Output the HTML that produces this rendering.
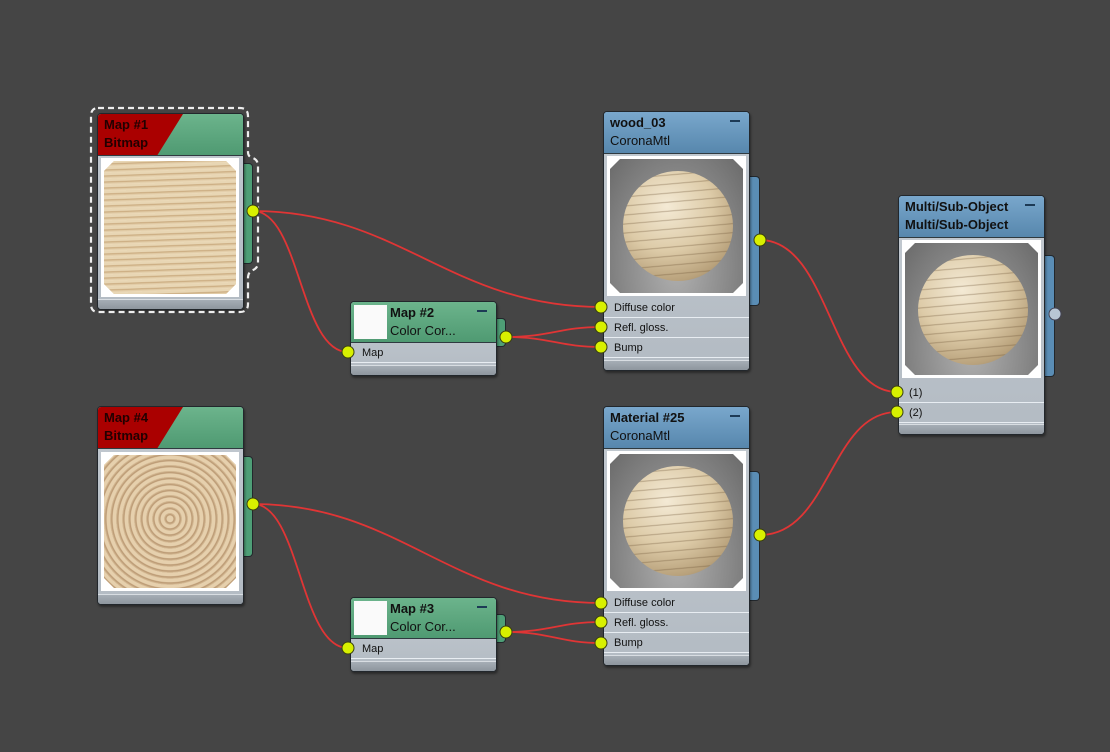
<!DOCTYPE html>
<html><head><style>
body{margin:0;width:1110px;height:752px;background:#454545;position:relative;overflow:hidden;font-family:"Liberation Sans",sans-serif;}
.n{position:absolute;background:linear-gradient(#c3cad1,#b3bbc3);border:1px solid #22272c;border-radius:4px;box-shadow:1px 2px 2px rgba(0,0,0,.4);}
.hd{position:absolute;left:0;right:0;top:0;border-radius:3px 3px 0 0;border-bottom:1px solid #2f3a40;overflow:hidden;}
.g{background:linear-gradient(#6cb48c,#4f9a72);}
.b{background:linear-gradient(#79a7cc,#5787ad);}
.red{position:absolute;left:0;top:0;width:85px;height:100%;background:#a00;clip-path:polygon(0 0,100% 0,70% 100%,0 100%);}
.t{position:absolute;font-size:13px;font-weight:bold;color:#111;line-height:18px;}
.t2{font-weight:normal;}
.img{position:absolute;background:#fff;}
.pic{position:absolute;left:3px;top:3px;right:3px;bottom:3px;clip-path:polygon(10px 0,calc(100% - 10px) 0,100% 10px,100% calc(100% - 10px),calc(100% - 10px) 100%,10px 100%,0 calc(100% - 10px),0 10px);}
.sph{background:radial-gradient(ellipse at 50% 80%,#b0b0b0,#8a8a8a 55%,#6a6a6a);}
.ball{position:absolute;left:13px;top:12px;width:110px;height:110px;border-radius:50%;background:repeating-linear-gradient(175deg,rgba(120,95,60,0) 0 7px,rgba(110,85,55,.4) 8px,rgba(120,95,60,0) 9px),radial-gradient(circle at 40% 32%,#f4ead5,#ddcba8 45%,#b9a27c 75%,#7d6d55);}
.tab{position:absolute;border:1px solid #22272c;border-left:none;border-radius:0 4px 4px 0;}
.row{position:absolute;left:0;right:0;height:20px;border-bottom:1px solid #e8edf2;font-size:11px;color:#111;line-height:20px;padding-left:10px;box-sizing:border-box;}
.ft{position:absolute;left:0;right:0;bottom:0;height:9px;background:linear-gradient(#a5adb5,#8e969e);border-top:1px solid #d8dde2;border-radius:0 0 3px 3px;}
.min{position:absolute;right:9px;top:8px;width:10px;height:2px;background:#1d3a55;}
.wood1{background:repeating-linear-gradient(178deg,#e8d6b4 0 2px,#c8a87c 3px,#dfc8a2 4px,#eddcbc 6px),#e0c9a3;}
.wood2{background:repeating-radial-gradient(circle at 50% 48%,#e6d0ad 0 3px,#b89670 4px,#dcc39e 6px),#ddc49e;}
</style></head><body>
<svg width="1110" height="752" style="position:absolute;left:0;top:0" fill="none" stroke="#e03535" stroke-width="1.8">
<path d="M253 211 C400 211,450 307,601 307"/>
<path d="M253 211 C300 211,300 352,348 352"/>
<path d="M506 337 C550 337,560 327,601 327"/>
<path d="M506 337 C550 337,560 347,601 347"/>
<path d="M760 240 C830 240,830 392,897 392"/>
<path d="M253 504 C400 504,450 603,601 603"/>
<path d="M253 504 C300 504,300 648,348 648"/>
<path d="M506 632 C550 632,560 622,601 622"/>
<path d="M506 632 C550 632,560 643,601 643"/>
<path d="M760 535 C830 535,830 412,897 412"/>
</svg>

<!-- Map1 -->
<div class="tab" style="left:243px;top:163px;width:9px;height:99px;background:#4e9e76"></div>
<div class="n" style="left:97px;top:113px;width:145px;height:195px">
<div class="hd g" style="height:41px"><div class="red"></div></div>
<div class="t" style="left:6px;top:2px;color:#200">Map #1<br>Bitmap</div>
<div class="img" style="left:3px;top:44px;width:138px;height:139px"><div class="pic wood1"></div></div>
<div class="ft"></div></div>
<svg width="1110" height="752" style="position:absolute;left:0;top:0" fill="none" stroke="#eee" stroke-width="2.2" stroke-dasharray="6 4">
<path d="M98 108 H240 Q248 108 248 116 V152 Q248 157 253 158 Q258 160 258 166 V262 Q258 268 253 270 Q248 272 248 278 V304 Q248 312 240 312 H98 Q91 312 91 304 V116 Q91 108 98 108 Z"/>
</svg>

<!-- Map4 -->
<div class="tab" style="left:243px;top:456px;width:9px;height:99px;background:#4e9e76"></div>
<div class="n" style="left:97px;top:406px;width:145px;height:197px">
<div class="hd g" style="height:41px"><div class="red"></div></div>
<div class="t" style="left:6px;top:2px;color:#200">Map #4<br>Bitmap</div>
<div class="img" style="left:3px;top:45px;width:138px;height:139px"><div class="pic wood2"></div></div>
<div class="ft"></div></div>

<!-- Map2 / Map3 -->
<div class="tab" style="left:496px;top:318px;width:9px;height:27px;background:#4e9e76"></div>
<div class="n" style="left:350px;top:301px;width:145px;height:73px">
<div class="hd g" style="height:40px"></div>
<div style="position:absolute;left:3px;top:3px;width:33px;height:34px;background:#fafafa"></div>
<div class="t" style="left:39px;top:2px">Map #2<br><span class="t2">Color Cor...</span></div><div class="min"></div>
<div class="row" style="top:41px;padding-left:11px">Map</div>
<div class="ft"></div></div>
<div class="tab" style="left:496px;top:614px;width:9px;height:27px;background:#4e9e76"></div>
<div class="n" style="left:350px;top:597px;width:145px;height:73px">
<div class="hd g" style="height:40px"></div>
<div style="position:absolute;left:3px;top:3px;width:33px;height:34px;background:#fafafa"></div>
<div class="t" style="left:39px;top:2px">Map #3<br><span class="t2">Color Cor...</span></div><div class="min"></div>
<div class="row" style="top:41px;padding-left:11px">Map</div>
<div class="ft"></div></div>

<!-- wood_03 -->
<div class="tab" style="left:749px;top:176px;width:10px;height:128px;background:#5a8db5"></div>
<div class="n" style="left:603px;top:111px;width:145px;height:258px">
<div class="hd b" style="height:41px"></div>
<div class="t" style="left:6px;top:2px">wood_03<br><span class="t2">CoronaMtl</span></div><div class="min"></div>
<div class="img" style="left:3px;top:44px;width:139px;height:140px"><div class="pic sph"><div class="ball"></div></div></div>
<div class="row" style="top:186px">Diffuse color</div>
<div class="row" style="top:206px">Refl. gloss.</div>
<div class="row" style="top:226px">Bump</div>
<div class="ft"></div></div>

<!-- Material 25 -->
<div class="tab" style="left:749px;top:471px;width:10px;height:128px;background:#5a8db5"></div>
<div class="n" style="left:603px;top:406px;width:145px;height:258px">
<div class="hd b" style="height:41px"></div>
<div class="t" style="left:6px;top:2px">Material #25<br><span class="t2">CoronaMtl</span></div><div class="min"></div>
<div class="img" style="left:3px;top:44px;width:139px;height:140px"><div class="pic sph"><div class="ball"></div></div></div>
<div class="row" style="top:186px">Diffuse color</div>
<div class="row" style="top:206px">Refl. gloss.</div>
<div class="row" style="top:226px">Bump</div>
<div class="ft"></div></div>

<!-- Multi -->
<div class="tab" style="left:1044px;top:255px;width:10px;height:120px;background:#5a8db5"></div>
<div class="n" style="left:898px;top:195px;width:145px;height:238px">
<div class="hd b" style="height:41px"></div>
<div class="t" style="left:6px;top:2px">Multi/Sub-Object<br>Multi/Sub-Object</div><div class="min"></div>
<div class="img" style="left:3px;top:44px;width:139px;height:138px"><div class="pic sph"><div class="ball"></div></div></div>
<div class="row" style="top:187px">(1)</div>
<div class="row" style="top:207px">(2)</div>
<div class="ft"></div></div>

<svg width="1110" height="752" style="position:absolute;left:0;top:0" fill="#d8f000" stroke="#3a4010" stroke-width="1">
<circle cx="253" cy="211" r="6"/><circle cx="253" cy="504" r="6"/>
<circle cx="348" cy="352" r="6"/><circle cx="348" cy="648" r="6"/>
<circle cx="506" cy="337" r="6"/><circle cx="506" cy="632" r="6"/>
<circle cx="601" cy="307" r="6"/><circle cx="601" cy="327" r="6"/><circle cx="601" cy="347" r="6"/>
<circle cx="601" cy="603" r="6"/><circle cx="601" cy="622" r="6"/><circle cx="601" cy="643" r="6"/>
<circle cx="760" cy="240" r="6"/><circle cx="760" cy="535" r="6"/>
<circle cx="897" cy="392" r="6"/><circle cx="897" cy="412" r="6"/>
<circle cx="1055" cy="314" r="6" fill="#b8c6d4" stroke="#445"/>
</svg>
</body></html>
